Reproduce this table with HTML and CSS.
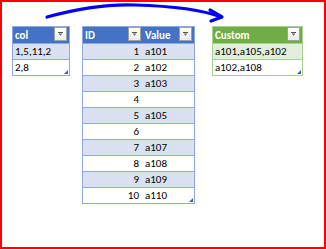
FILE: index.html
```html
<!DOCTYPE html>
<html>
<head>
<meta charset="utf-8">
<link rel="stylesheet" href="styles.css">
</head>
<body>
<div class="frame">
  <svg class="arrow" width="326" height="30" viewBox="0 0 326 30">
    <path d="M47,17 C80,8 110,4 135,5 C170,6 200,9 221,17" fill="none" stroke="#0000ff" stroke-width="3.2" stroke-linecap="round"/>
    <path d="M210,10 L222,17 L211,21" fill="none" stroke="#0000ff" stroke-width="3.2" stroke-linecap="round" stroke-linejoin="round"/>
  </svg>
  <div class="sheet">
    <table class="xt blue w-col">
      <tr class="hd"><th class="c1"><span class="lbl">col</span><span class="fb"><svg width="7" height="4" viewBox="0 0 7 4"><path d="M1,0.5H6M2,2H5M3,3H4" stroke="#555" stroke-width="1"/></svg></span></th></tr>
      <tr class="band"><td>1,5,11,2</td></tr>
      <tr><td class="last">2,8<span class="rh"></span></td></tr>
    </table>

    <table class="xt blue w-mid">
      <tr class="hd">
        <th class="c-id"><span class="lbl">ID</span><span class="fb"><svg width="7" height="4" viewBox="0 0 7 4"><path d="M1,0.5H6M2,2H5M3,3H4" stroke="#555" stroke-width="1"/></svg></span></th>
        <th class="c-val"><span class="lbl">Value</span><span class="fb"><svg width="7" height="4" viewBox="0 0 7 4"><path d="M1,0.5H6M2,2H5M3,3H4" stroke="#555" stroke-width="1"/></svg></span></th>
      </tr>
      <tr class="band"><td class="num">1</td><td>a101</td></tr>
      <tr><td class="num">2</td><td>a102</td></tr>
      <tr class="band"><td class="num">3</td><td>a103</td></tr>
      <tr><td class="num">4</td><td></td></tr>
      <tr class="band"><td class="num">5</td><td>a105</td></tr>
      <tr><td class="num">6</td><td></td></tr>
      <tr class="band"><td class="num">7</td><td>a107</td></tr>
      <tr><td class="num">8</td><td>a108</td></tr>
      <tr class="band"><td class="num">9</td><td>a109</td></tr>
      <tr><td class="num">10</td><td class="last">a110<span class="rh"></span></td></tr>
    </table>

    <table class="xt green w-cus">
      <tr class="hd"><th class="c1"><span class="lbl">Custom</span><span class="fb"><svg width="7" height="4" viewBox="0 0 7 4"><path d="M1,0.5H6M2,2H5M3,3H4" stroke="#555" stroke-width="1"/></svg></span></th></tr>
      <tr class="band"><td>a101,a105,a102</td></tr>
      <tr><td class="last">a102,a108<span class="rh"></span></td></tr>
    </table>
  </div>
</div>
</body>
</html>
```

FILE: styles.css
```css
html, body {
  margin: 0;
  padding: 0;
  background: #ffffff;
}
.frame {
  position: relative;
  box-sizing: border-box;
  width: 326px;
  height: 249px;
  border: 2px solid #ff0000;
  font-family: Carlito, "Liberation Sans", Arial, sans-serif;
  font-size: 11px;
  color: #000;
}
.arrow {
  position: absolute;
  left: -2px;
  top: -2px;
}
.sheet {
  display: flex;
  align-items: flex-start;
  padding: 24px 0 0 10px;
}
.xt {
  border-collapse: collapse;
  table-layout: fixed;
  border: 1px solid;
}
.w-col { width: 58px; }
.w-mid { width: 113px; margin-left: 12px; }
.w-cus { width: 91px; margin-left: 17px; }
.xt th, .xt td {
  height: 15px;
  padding: 0 0 0 2px;
  line-height: 15px;
  white-space: nowrap;
  overflow: visible;
  text-align: left;
  vertical-align: middle;
  position: relative;
}
.xt th {
  color: #ffffff;
  font-weight: bold;
}
.hd th > * {
  vertical-align: middle;
}
.hd th {
  padding-right: 2px;
}
.hd .lbl {
  display: inline-block;
}
.fb {
  position: absolute;
  right: 2px;
  top: 0px;
  box-sizing: border-box;
  width: 13px;
  height: 14px;
  border: 1px solid #a0a0a0;
  background: linear-gradient(#ffffff, #ececec);
  display: flex;
  align-items: center;
  justify-content: center;
}
.fb svg { display: block; }
.c-id { width: 56px; }
.num {
  text-align: right !important;
  padding-right: 4px !important;
}
.rh {
  position: absolute;
  right: 1px;
  bottom: 1px;
  width: 0;
  height: 0;
  border-left: 4px solid transparent;
  border-bottom: 4px solid #3f5faa;
}

/* blue style */
.blue { border-color: #8ea9db; }
.blue th { background: #4472c4; border-bottom: 1px solid #8ea9db; }
.blue td { border-bottom: 1px solid #8ea9db; background: #ffffff; }
.blue .band td { background: #d9e1f2; }

/* green style */
.green { border-color: #a9d08e; }
.green th { background: #70ad47; border-bottom: 1px solid #a9d08e; }
.green td { border-bottom: 1px solid #a9d08e; background: #ffffff; }
.green .band td { background: #e2efda; }
```
